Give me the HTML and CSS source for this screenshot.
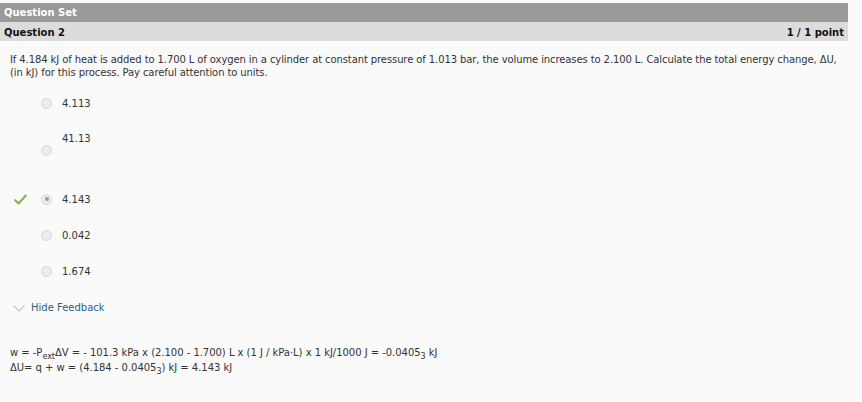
FILE: index.html
```html
<!DOCTYPE html>
<html>
<head>
<meta charset="utf-8">
<link rel="stylesheet" href="styles.css">
</head>
<body>
<div class="page">
  <div class="set-bar">Question Set</div>
  <div class="q-bar"><span>Question 2</span><span>1 / 1 point</span></div>
  <div class="q-text">If 4.184 kJ of heat is added to 1.700 L of oxygen in a cylinder at constant pressure of 1.013 bar, the volume increases to 2.100 L. Calculate the total energy change, ΔU, (in kJ) for this process. Pay careful attention to units.</div>
  <div class="options">
    <div class="opt opt1"><span class="mark"></span><span class="radio"></span><span class="label">4.113</span></div>
    <div class="opt opt2"><span class="mark"></span><span class="radio"></span><span class="label">41.13</span></div>
    <div class="opt opt3"><span class="mark"><svg width="13" height="11" viewBox="0 0 13 11"><path d="M1.2 6.2 L4.6 9.4 L11.8 1.6" fill="none" stroke="#8fb24c" stroke-width="2.2" stroke-linecap="round" stroke-linejoin="round"/></svg></span><span class="radio checked"></span><span class="label">4.143</span></div>
    <div class="opt"><span class="mark"></span><span class="radio"></span><span class="label">0.042</span></div>
    <div class="opt"><span class="mark"></span><span class="radio"></span><span class="label">1.674</span></div>
  </div>
  <div class="feedback-toggle"><svg width="12" height="7" viewBox="0 0 12 7"><path d="M0.5 0.5 L6 6 L11.5 0.5" fill="none" stroke="#c8c8c8" stroke-width="1.2"/></svg><span>Hide Feedback</span></div>
  <div class="feedback">
    <div>w = -P<sub>ext</sub>ΔV = - 101.3 kPa x (2.100 - 1.700) L x (1 J / kPa·L) x 1 kJ/1000 J = -0.0405<sub>3</sub> kJ</div>
    <div>ΔU= q + w = (4.184 - 0.0405<sub>3</sub>) kJ = 4.143 kJ</div>
  </div>
</div>
</body>
</html>
```
FILE: styles.css
```css
html, body {
  margin: 0;
  padding: 0;
  background: #fafafa;
}
body {
  font-family: "DejaVu Sans", Verdana, sans-serif;
  font-size: 10px;
  color: #333;
}
.page {
  width: 848px;
  padding-top: 3px;
}
.set-bar {
  background: #999999;
  color: #fff;
  font-weight: bold;
  font-size: 10px;
  height: 19px;
  line-height: 19px;
  padding-left: 4px;
}
.q-bar {
  background: #dcdcdc;
  color: #111;
  font-weight: bold;
  font-size: 10px;
  height: 19px;
  line-height: 21px;
  padding: 0 4px;
  display: flex;
  justify-content: space-between;
}
.q-text {
  padding: 12px 10px 0 10px;
  line-height: 13px;
  letter-spacing: -0.1px;
}
.options {
  display: flex;
  flex-direction: column;
  padding-top: 18px;
}
.opt {
  display: flex;
  align-items: center;
  height: 12px;
  margin-bottom: 24px;
}
.mark {
  width: 41px;
  flex: none;
  display: flex;
  align-items: center;
}
.mark svg { margin-left: 14px; }
.radio {
  flex: none;
  width: 11px;
  height: 11px;
  box-sizing: border-box;
  border-radius: 50%;
  background: #ececec;
  border: 1px solid #d8d8d8;
  margin-right: 10px;
  position: relative;
}
.radio.checked::after {
  content: "";
  position: absolute;
  left: 2.5px;
  top: 2.5px;
  width: 4px;
  height: 4px;
  border-radius: 50%;
  background: #999;
}
.opt2 {
  height: 23px;
  align-items: stretch;
  margin-bottom: 37px;
}
.opt2 .radio { align-self: flex-end; }
.opt2 .label { align-self: flex-start; line-height: 12px; }
.feedback-toggle {
  display: flex;
  align-items: center;
  padding-left: 13px;
  margin-top: 1px;
  color: #2d5f7f;
  font-size: 10px;
}
.feedback-toggle svg { margin-right: 6px; margin-top: 2px; }
.feedback {
  padding: 32px 0 0 10px;
  line-height: 15px;
  letter-spacing: -0.03px;
}
sub {
  font-size: 8px;
  line-height: 0;
  vertical-align: -3px;
}
```
